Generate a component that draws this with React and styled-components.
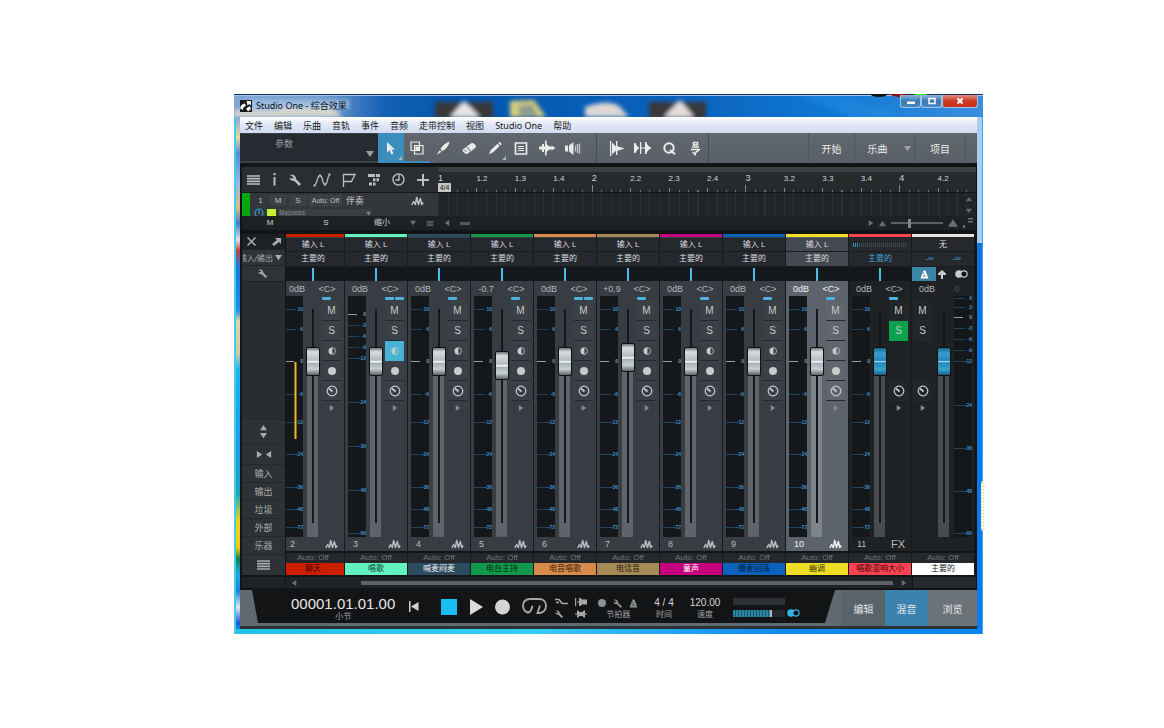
import { useState } from "react";
import styled, { createGlobalStyle } from "styled-components";

const menus = ["文件", "编辑", "乐曲", "音轨", "事件", "音频", "走带控制", "视图", "Studio One", "帮助"];

const beats = ["1", "1.2", "1.3", "1.4", "2", "2.2", "2.3", "2.4", "3", "3.2", "3.3", "3.4", "4", "4.2"];

const monoScale = [
  { y: 13, text: "10" },
  { y: 33, text: "6" },
  { y: 65, text: "0", zero: true },
  { y: 98, text: "-6" },
  { y: 126, text: "-12" },
  { y: 158, text: "-24" },
  { y: 191, text: "-36" },
  { y: 213, text: "-48" },
  { y: 231, text: "-72" },
];

const stereoScale = [
  { y: 18, text: "0", zero: true },
  { y: 29, text: "-3" },
  { y: 40, text: "-6" },
  { y: 51, text: "-9" },
  { y: 62, text: "-12" },
  { y: 106, text: "-24" },
  { y: 150, text: "-36" },
  { y: 194, text: "-48" },
  { y: 237, text: "-60" },
];

const masterScale = [
  { y: 2, text: "6" },
  { y: 11, text: "3" },
  { y: 21, text: "0", zero: true },
  { y: 32, text: "-3" },
  { y: 43, text: "-6" },
  { y: 54, text: "-9" },
  { y: 65, text: "-12" },
  { y: 109, text: "-24" },
  { y: 152, text: "-36" },
  { y: 195, text: "-48" },
  { y: 237, text: "-60" },
];

const channels = [
  { id: 2, name: "聊天", color: "#cc1f00", ink: "#3a0500", gain: "0dB", level: 76, peak: true },
  { id: 3, name: "唱歌", color: "#62f2c0", ink: "#0c4030", gain: "0dB", level: 76, stereo: true, mono: true },
  { id: 4, name: "喊麦闷麦", color: "#2d4b5e", ink: "#f2f5f7", gain: "0dB", level: 76 },
  { id: 5, name: "电台主持", color: "#11984a", ink: "#032a12", gain: "-0.7", level: 74 },
  { id: 6, name: "电音唱歌", color: "#d68a4c", ink: "#3a1c04", gain: "0dB", level: 76, stereo: true },
  { id: 7, name: "电话音", color: "#a58a58", ink: "#2c220c", gain: "+0.9", level: 78 },
  { id: 8, name: "童声", color: "#c6007c", ink: "#ffffff", gain: "0dB", level: 76 },
  { id: 9, name: "爆麦回荡", color: "#0a62bc", ink: "#021b3a", gain: "0dB", level: 76 },
  { id: 10, name: "幽调", color: "#f0de26", ink: "#383204", gain: "0dB", level: 76, selected: true },
  { id: 11, name: "唱歌混响大小", color: "#fb4450", ink: "#3c0408", gain: "0dB", level: 76, fx: true },
];

const WaveIcon = () => (
  <svg width="13" height="10" viewBox="0 0 13 10" fill="none" stroke="currentColor" strokeWidth="1.500" strokeLinejoin="round">
    <path d="M.8 9 2.600 5.500 4.300 8.500 5.700 1.500 7.500 8.500 9.300 2.500 10.800 8.500 12.200 6.500" />
  </svg>
);

const WrenchIcon = ({ size = 11 }) => (
  <svg width={size} height={size} viewBox="0 0 12 12" fill="currentColor">
    <path d="M1 1.200C3.800-.2 7.200 1.500 7 5l5 5-1.800 2L5.200 7C3 7.300.8 6.200.5 3.800l2.700.9L4.700 3.200z" />
  </svg>
);

const LinesIcon = ({ size = 13 }) => (
  <svg width={size} height={size - 3} viewBox="0 0 13 10" stroke="currentColor" strokeWidth="1.700">
    <path d="M0 1h13M0 3.600h13M0 6.300h13M0 9h13" />
  </svg>
);

const Triangle = ({ dir = "down", size = 7 }) => {
  const paths = {
    down: "M0 1h8L4 7z",
    up: "M0 7h8L4 1z",
    right: "M1 0v8l6-4z",
    left: "M7 0v8L1 4z",
  };
  return (
    <svg width={size} height={size} viewBox="0 0 8 8" fill="currentColor">
      <path d={paths[dir]} />
    </svg>
  );
};

const KnobIcon = () => (
  <svg width="12" height="12" viewBox="0 0 12 12" fill="none" stroke="currentColor" strokeWidth="1.200">
    <circle cx="6" cy="6" r="4.800" />
    <path d="M6.500 6.500 3 3.500" strokeWidth="1.700" />
  </svg>
);

const MonoIcon = () => (
  <svg width="8" height="8" viewBox="0 0 8 8">
    <path d="M4 .5a3.500 3.500 0 0 0 0 7z" fill="currentColor" />
    <path d="M4 .5a3.500 3.500 0 0 1 0 7z" fill="none" stroke="currentColor" strokeWidth=".8" />
  </svg>
);

const MetronomeIcon = ({ size = 10 }) => (
  <svg width={size} height={size} viewBox="0 0 10 10">
    <path d="M4 .5h2L9.500 9.500H.5z" fill="currentColor" />
    <path d="M3.200 7h3.600M5 6.500l-1.500-4" stroke="#131415" strokeOpacity=".6" strokeWidth=".8" />
  </svg>
);

const StereoIcon = () => (
  <svg width="13" height="8" viewBox="0 0 13 8">
    <circle cx="4" cy="4" r="3.800" fill="currentColor" />
    <circle cx="9" cy="4" r="3.200" fill="#101315" stroke="currentColor" strokeWidth="1.200" />
  </svg>
);

const toolIcons = {
  箭头工具: (
    <svg width="12" height="16" viewBox="0 0 12 16" fill="currentColor">
      <path d="M2 2v10.500l2.600-2.300 1.900 4.300 2-.9-1.900-4.200H10z" />
    </svg>
  ),
  范围工具: (
    <svg width="14" height="14" viewBox="0 0 14 14" fill="none" stroke="currentColor" strokeWidth="1.200">
      <path d="M1 1h8.500v8.500H1z" />
      <path d="M4.500 4.500H13V13H4.500z" />
      <path d="M6 6h2.500v2.500H6z" fill="currentColor" />
    </svg>
  ),
  切分工具: (
    <svg width="14" height="14" viewBox="0 0 14 14" fill="currentColor">
      <path d="M13.500.5C9 2 6 5 4.300 8.300l2.200 1.700C10 8 13 4.500 13.500.5zM3.600 9.300l1.900 1.500L.8 13.700z" />
    </svg>
  ),
  橡皮工具: (
    <svg width="15" height="13" viewBox="0 0 15 13">
      <path d="M1 7.500 9 1.300q1.500-.8 3 .3l1.500 1.700q1 1.400-.3 2.700L6 11.500q-1.500 1-3.200-.2L1 9.800Q.2 8.700 1 7.500z" fill="#e8e8e6" />
      <path d="M4.500 5.200q2.700 1 3.700 4.300" stroke="#7b8187" strokeWidth="1.200" fill="none" />
      <path d="M2.300 8.300q1.500 0 2.300 1.800" stroke="#7b8187" fill="none" />
    </svg>
  ),
  绘画工具: (
    <svg width="14" height="14" viewBox="0 0 14 14" fill="currentColor">
      <path d="m9.500 2.700 2.300 2.200-7 6.600L1 13.200l1.600-3.900zM10.300 2 11.500.8l2.300 2.200-1.200 1.200z" />
    </svg>
  ),
  静音工具: (
    <svg width="14" height="13" viewBox="0 0 14 13" fill="none" stroke="currentColor" strokeWidth="1.700">
      <path d="M1.500 1h11v11h-11z" />
      <path d="M4 4.500h6M4 6.500h6M4 8.500h6" strokeWidth="1.200" />
    </svg>
  ),
  弯曲工具: (
    <svg width="17" height="16" viewBox="0 0 17 16" fill="currentColor">
      <path d="M0 6.500h3V4h2v2.500h1V.5h1.600V4c1.500 2 3 2.200 4.900 3V5.500l4 2.500-4 2.500V9c-1.900.8-3.400 1-4.900 3v3.500H6V9.500H5V12H3V9.500H0z" />
    </svg>
  ),
  试听工具: (
    <svg width="16" height="13" viewBox="0 0 16 13">
      <path d="M0 3.500h3v6H0zM4 3.500 8.500 0v13L4 9.500z" fill="#e8e8e6" />
      <path d="M10.500 3.500v6M12.500 2v9M14.500 1.500v10" stroke="#c4c8ca" strokeWidth="1.300" />
    </svg>
  ),
};

const editIcons = {
  瞬态检测: (
    <svg width="16" height="15" viewBox="0 0 16 15" fill="currentColor">
      <path d="M1 0h1.200v15H1zM3 1.500l4 4V0h1.300v5.200c2 1 4.500 1 7.200 2.300-2.700 1.300-5.200 1.300-7.200 2.300V14H7V9.500l-4 4z" />
    </svg>
  ),
  量化边界: (
    <svg width="18" height="14" viewBox="0 0 18 14" fill="currentColor">
      <path d="M0 2h1.500C2.500 4.500 3.500 5.500 5.500 7c-2 1.500-3 2.500-4 5H0zM6 1h1.300v12H6zM7 6.400h4v1.200H7zM11 1h1.300c.7 3 2.500 4.500 5.200 6-2.700 1.500-4.500 3-5.200 6H11z" />
    </svg>
  ),
  量化: (
    <svg width="13" height="13" viewBox="0 0 13 13" fill="none" stroke="currentColor" strokeWidth="2">
      <circle cx="6" cy="6" r="4.700" />
      <path d="m7 8 5 4.300" />
    </svg>
  ),
  宏: (
    <svg width="12" height="15" viewBox="0 0 12 15" fill="none" stroke="currentColor" strokeWidth="1.500">
      <path d="M4.500 4V1.500h4V4zM3 6h7M2 8.500h9M10 8.500c0 2-4 1-4 5L3.500 11" />
    </svg>
  ),
};

const trackIcons = {
  轨道列表: <LinesIcon />,
  检查器: (
    <svg width="5" height="13" viewBox="0 0 5 13" fill="currentColor">
      <path d="M1.500 0h2v2.200h-2zM1.500 4h2v8.500h-2z" />
    </svg>
  ),
  轨道工具: <WrenchIcon size={12} />,
  自动化: (
    <svg width="18" height="14" viewBox="0 0 18 14" fill="none" stroke="currentColor" strokeWidth="1.300">
      <path d="M1.500 12.500C4.500 11 4 2.500 7 2.500s2 9 5 9 2-8 4.500-10" />
      <path d="M.5 11.500h2v2h-2zM6 1.500h2v2H6zM11 10.500h2v2h-2zM15.500.5h2v2h-2z" fill="currentColor" stroke="none" />
    </svg>
  ),
  标记轨: (
    <svg width="14" height="14" viewBox="0 0 14 14" fill="none" stroke="currentColor" strokeWidth="1.300">
      <path d="M1.500 14V1.500H13L9.500 8.500h-8" />
    </svg>
  ),
  编曲轨: (
    <svg width="12" height="12" viewBox="0 0 12 12" fill="currentColor">
      <path d="M0 0h7v3H0zM8 0h4v3H8zM5 4.200h2.500v3H5zM8.500 4.200h2.500v3H8.500zM1 8.500h3v3H1zM5 8.500h2.500v3H5z" />
    </svg>
  ),
  速度轨: (
    <svg width="13" height="13" viewBox="0 0 13 13" fill="none" stroke="currentColor" strokeWidth="1.400">
      <circle cx="6.500" cy="6.500" r="5.500" />
      <path d="M7 2v5H3.500" />
    </svg>
  ),
  添加轨道: (
    <svg width="12" height="12" viewBox="0 0 12 12" stroke="currentColor" strokeWidth="2">
      <path d="M6 0v12M0 6h12" />
    </svg>
  ),
};

function MeterScale({ marks, peak }) {
  return (
    <MeterSvg width="18" height="241" viewBox="0 0 18 241">
      {marks.map((mark) => (
        <g key={mark.text + mark.y}>
          <path d={`M0 ${mark.y + 0.5}H${mark.zero ? 9 : 11}`} stroke={mark.zero ? "#9a9c9e" : "#20425a"} />
          <text x="18" y={mark.y + 2} textAnchor="end" fill={mark.zero ? "#7d9db2" : "#3f92cc"}>
            {mark.text}
          </text>
        </g>
      ))}
      {peak && <path d="M10.500 66v77" stroke="#f0b824" strokeWidth="2" />}
    </MeterSvg>
  );
}

function Fader({ label, start, blue, light }) {
  const [value, setValue] = useState(start);
  return (
    <FaderInput
      type="range"
      min="0"
      max="100"
      aria-label={label}
      value={value}
      $blue={blue}
      $light={light}
      onChange={(event) => setValue(Number(event.target.value))}
      style={{ "--lit": `${14 + value * 2.12}px` }}
    />
  );
}

function Channel({ data }) {
  const { id, name, color, ink, gain, level, stereo, mono, peak, selected, fx } = data;
  return (
    <Strip $selected={selected} $dark={fx}>
      <ColorBar $color={color} />
      <Slot $selected={selected}>{fx ? <InputMeter /> : "输入 L"}</Slot>
      <Slot $selected={selected} $tall $blue={fx}>主要的</Slot>
      <Pan />
      <Values $bright={selected}>
        <span>{gain}</span>
        <span>&lt;C&gt;</span>
      </Values>
      <FaderArea>
        <MeterScale marks={stereo && mono ? stereoScale : monoScale} peak={peak} />
        <Fader label={name} start={level} blue={fx} light={selected} />
        <ButtonColumn>
          <Links>
            <i />
            {stereo && <i />}
          </Links>
          <StripButton aria-label="静音">M</StripButton>
          <StripButton aria-label="独奏" $on={fx && "#0ba24e"}>S</StripButton>
          <StripButton aria-label="单声道" $on={mono && "#45b4d4"} $hidden={fx}><MonoIcon /></StripButton>
          <StripButton aria-label="录音" $hidden={fx}><RecordDot /></StripButton>
          <StripButton aria-label="监听"><KnobIcon /></StripButton>
          <StripButton aria-label="展开" $plain><Triangle dir="right" size={6} /></StripButton>
        </ButtonColumn>
      </FaderArea>
      <NumberRow $bright={selected}>
        <span>{id}</span>
        {fx ? <FxMark>FX</FxMark> : <WaveIcon />}
      </NumberRow>
      <AutoRow>Auto: Off</AutoRow>
      <NameLabel $color={color} $ink={ink}>{name}</NameLabel>
    </Strip>
  );
}

function Master() {
  return (
    <Strip $dark>
      <ColorBar $color="#e4e4e4" />
      <Slot>无</Slot>
      <Slot $tall $blue $spread>
        <span>-∞</span>
        <span>-∞</span>
      </Slot>
      <MasterTools>
        <button aria-label="节拍器"><MetronomeIcon size={9} /></button>
        <button aria-label="输出">
          <svg width="8" height="9" viewBox="0 0 8 9" fill="currentColor"><path d="M3 9V5H0V3.500L4 0l4 3.500V5H5v4z" /></svg>
        </button>
        <button aria-label="立体声"><StereoIcon /></button>
      </MasterTools>
      <Values>
        <span>0dB</span>
        <Dim>0</Dim>
      </Values>
      <FaderArea>
        <ButtonColumn $left>
          <Links />
          <StripButton aria-label="静音">M</StripButton>
          <StripButton aria-label="独奏">S</StripButton>
          <StripButton $hidden />
          <StripButton $hidden />
          <StripButton aria-label="监听"><KnobIcon /></StripButton>
          <StripButton aria-label="展开" $plain><Triangle dir="right" size={6} /></StripButton>
        </ButtonColumn>
        <Fader label="主要的" start={76} blue />
        <MeterScale marks={masterScale} />
      </FaderArea>
      <NumberRow />
      <AutoRow>Auto: Off</AutoRow>
      <NameLabel $color="#ffffff" $ink="#222222">主要的</NameLabel>
    </Strip>
  );
}

export default function App() {
  return (
    <>
      <GlobalStyle />
      <Page>
        <Window>
          <TitleBar>
            <Glass viewBox="0 0 749 23" preserveAspectRatio="none">
              <defs>
                <filter id="haze"><feGaussianBlur stdDeviation="2" /></filter>
                <linearGradient id="sky">
                  <stop offset="0" stopColor="#7fa6d4" />
                  <stop offset=".12" stopColor="#7199cc" />
                  <stop offset=".2" stopColor="#1360b4" />
                  <stop offset=".3" stopColor="#0456ae" />
                  <stop offset=".6" stopColor="#0a62bc" />
                  <stop offset=".8" stopColor="#0f78d4" />
                  <stop offset="1" stopColor="#3a8ee0" />
                </linearGradient>
              </defs>
              <path d="M0 0h749v23H0z" fill="url(#sky)" />
              <g filter="url(#haze)">
                <path d="M0 16h44l6-6 20 4 25-4 14 13H0z" fill="#d9d6cc" />
                <path d="M10 6h105v9H10z" fill="#a9c4e6" opacity=".8" />
                <path d="M201 8h58v17h-58z" fill="#37373b" />
                <path d="m216 23 14-16 16 16z" fill="#e6e6e6" />
                <path d="m276 7 24-1 12 17h-36z" fill="#d6cf7c" />
                <path d="m284 12 14-2 6 12h-18z" fill="#8d9c8c" />
                <path d="M351 13q22-8 34-1l10 11h-44z" fill="#ddd8d4" />
                <path d="M415 8h57v17h-57z" fill="#37373b" />
                <path d="m430 23 16-17 14 17z" fill="#e6dfdc" />
                <path d="m560 0 60 23h50L600 0z" fill="#2f9aec" opacity=".3" />
              </g>
              <path d="M0 .5h749" stroke="#1a2f52" />
              <path d="M0 1.500h749" stroke="#9cc7f2" />
              <path d="M636 0h18q-2 3-9 3t-9-3z" fill="#111" />
              <path d="M654 0h22q-6 3-11 3t-11-3z" fill="#8c1010" />
              <path d="M680 0h13q-1 4-6 4t-7-4z" fill="#35f018" />
            </Glass>
            <AppLogo width="12" height="12" viewBox="0 0 12 12">
              <path d="M0 0h12v12H0z" fill="#17191c" />
              <path d="M0 8.500Q.5 4 5 3.500l1 2.500Q3 6.500 3 10zM6.500 1H11v4.500L9.500 4 7.500 5.500zM6 8.500l4-2.500 1 3-3 2.500z" fill="#f4f4f4" />
            </AppLogo>
            <Title>Studio One - 综合效果</Title>
            <WindowButtons>
              <WindowButton aria-label="最小化"><svg width="8" height="8"><path d="M0 4.500h8v2.500H0z" fill="#fff" /></svg></WindowButton>
              <WindowButton aria-label="最大化"><svg width="8" height="8"><path d="M1 1.500h6v5H1z" fill="none" stroke="#fff" strokeWidth="1.500" /></svg></WindowButton>
              <WindowButton aria-label="关闭" $close><svg width="8" height="8"><path d="m1.500 1.500 5 5m0-5-5 5" stroke="#fff" strokeWidth="1.800" /></svg></WindowButton>
            </WindowButtons>
          </TitleBar>

          <Body>
            <MenuBar>
              {menus.map((menu) => (
                <button key={menu}>{menu}</button>
              ))}
            </MenuBar>

            <Toolbar>
              <ParamBox>
                <span>参数</span>
                <Triangle size={8} />
              </ParamBox>
              <ToolGroup>
                {Object.keys(toolIcons).map((tool, index) => (
                  <ToolButton key={tool} aria-label={tool} $active={index === 0} $underline={index === 1} $corner={index === 0 || index === 4}>
                    {toolIcons[tool]}
                  </ToolButton>
                ))}
              </ToolGroup>
              <ToolGroup $divided>
                {Object.keys(editIcons).map((tool) => (
                  <ToolButton key={tool} aria-label={tool}>{editIcons[tool]}</ToolButton>
                ))}
              </ToolGroup>
              <Pages>
                <PageButton>开始</PageButton>
                <PageButton>乐曲</PageButton>
                <PageArrow aria-label="乐曲列表"><Triangle size={7} /></PageArrow>
                <PageButton $wide>项目</PageButton>
              </Pages>
            </Toolbar>

            <Arrange>
              <TrackSide>
                <TrackTools>
                  {Object.keys(trackIcons).map((tool) => (
                    <button key={tool} aria-label={tool}>{trackIcons[tool]}</button>
                  ))}
                </TrackTools>
                <TrackHead>
                  <TrackLine>
                    <TrackNumber>1</TrackNumber>
                    <MiniButton>M</MiniButton>
                    <MiniButton>S</MiniButton>
                    <MiniButton $auto>Auto: Off</MiniButton>
                    <TrackName>伴奏</TrackName>
                    <WaveIcon />
                  </TrackLine>
                  <TrackLine $second>
                    <svg width="10" height="10" viewBox="0 0 10 10" fill="none" stroke="#2d9fc4" strokeWidth="1.200">
                      <circle cx="5" cy="5" r="4" />
                      <path d="M5 2v4" />
                    </svg>
                    <Swatch />
                    <Bypass>Bypass <Triangle size={5} /></Bypass>
                  </TrackLine>
                </TrackHead>
              </TrackSide>
              <Timeline>
                <Ruler>
                  {beats.map((beat) => (
                    <Beat key={beat} $bar={!beat.includes(".")}>
                      {beat}
                      {beat === "1" && <Signature>4/4</Signature>}
                    </Beat>
                  ))}
                </Ruler>
                <Lanes>
                  {beats.map((beat) => (
                    <i key={beat} />
                  ))}
                  <LaneScroll>
                    <Triangle dir="up" size={6} />
                    <Triangle size={6} />
                  </LaneScroll>
                </Lanes>
              </Timeline>
            </Arrange>

            <ArrangeFoot>
              <FootGroup>
                <button>M</button>
                <button>S</button>
                <button>缩小</button>
              </FootGroup>
              <FootIcons>
                <Triangle size={6} />
                <LinesIcon size={8} />
                <Triangle dir="left" size={6} />
                <ScrollStub />
              </FootIcons>
              <ZoomGroup>
                <Triangle dir="right" size={6} />
                <Triangle dir="up" size={7} />
                <ZoomSlider type="range" aria-label="缩放" defaultValue="34" />
                <Triangle dir="up" size={10} />
                <svg width="10" height="10" viewBox="0 0 10 10" fill="currentColor">
                  <path d="M5 0h5v1.500H5zM5 3h5v1.500H5zM0 7h2v3H0z" />
                </svg>
              </ZoomGroup>
            </ArrangeFoot>

            <Mixer>
              <Sidebar>
                <SideRow $dark>
                  <button aria-label="关闭混音台">
                    <svg width="9" height="9" viewBox="0 0 9 9" stroke="currentColor" strokeWidth="1.500"><path d="m.5.5 8 8m0-8-8 8" /></svg>
                  </button>
                  <button aria-label="分离">
                    <svg width="9" height="9" viewBox="0 0 9 9" fill="currentColor"><path d="M3 1h6v6L7 5 2 9 0 7l5-4z" /></svg>
                  </button>
                </SideRow>
                <SideRow>
                  <Clipped>输入/输出</Clipped>
                  <Triangle size={7} />
                </SideRow>
                <SideRow $center><WrenchIcon size={9} /></SideRow>
                <SideSpace />
                <SideButton $size={24} aria-label="高度">
                  <Stack>
                    <Triangle dir="up" size={7} />
                    <Triangle size={7} />
                  </Stack>
                </SideButton>
                <SideButton $size={21} aria-label="宽度">
                  <Triangle dir="right" size={7} />
                  <Triangle dir="left" size={7} />
                </SideButton>
                <SideButton $size={18}>输入</SideButton>
                <SideButton $size={18}>输出</SideButton>
                <SideButton $size={18}>垃圾</SideButton>
                <SideButton $size={18}>外部</SideButton>
                <SideButton $size={18}>乐器</SideButton>
                <SideButton $size={21} aria-label="列表"><LinesIcon size={13} /></SideButton>
              </Sidebar>
              <Console>
                <Strips>
                  {channels.map((channel) => (
                    <Channel key={channel.id} data={channel} />
                  ))}
                  <Master />
                </Strips>
              </Console>
            </Mixer>

            <ScrollRow>
              <ScrollSide />
              <ScrollTrack>
                <Triangle dir="left" size={6} />
                <ScrollThumb />
                <Triangle dir="right" size={6} />
              </ScrollTrack>
              <ScrollEnd />
            </ScrollRow>

            <TransportBar>
              <Transport>
                <Readout>
                  <TimeCode>00001.01.01.00</TimeCode>
                  <Small>小节</Small>
                </Readout>
                <PlainButton aria-label="返回零点" $space={14}>
                  <svg width="10" height="11" viewBox="0 0 10 11" fill="currentColor"><path d="M0 0h1.500v11H0zM9.500 1v9L2 5.500z" /></svg>
                </PlainButton>
                <PlainButton aria-label="停止" $space={22}><StopSquare /></PlainButton>
                <PlainButton aria-label="播放" $space={13}>
                  <svg width="13" height="16" viewBox="0 0 13 16" fill="#dcdcdc"><path d="M0 0v16l13-8z" /></svg>
                </PlainButton>
                <PlainButton aria-label="录音" $space={12}>
                  <svg width="15" height="16" viewBox="0 0 15 16"><circle cx="7.500" cy="8" r="7.500" fill="#d4d4d4" /></svg>
                </PlainButton>
                <PlainButton aria-label="循环" $space={12}>
                  <svg width="25" height="17" viewBox="0 0 25 17" fill="none" stroke="#a4a6a8" strokeWidth="1.900">
                    <path d="M6 14.500C2.800 13.500 1 11 1 7.500 1 3.500 4 1 8 1h9c4 0 7 2.500 7 6.500s-2.500 7-6 7.500h-2.500L18 7.500M5 14.800c3 0 4.500-2 5.500-7" />
                  </svg>
                </PlainButton>
                <IconGrid>
                  <svg width="13" height="8" viewBox="0 0 13 8" fill="none" stroke="currentColor" strokeWidth="1.600"><path d="M0 1.500h4l3 4h6M1 4.500h3" /></svg>
                  <svg width="12" height="8" viewBox="0 0 12 8" fill="currentColor"><path d="M0 0h1.200v8H0zM2 3.400h2V0h1.500l1.500 1.500h5v5H7L5.500 8H4V4.600H2z" /></svg>
                  <WrenchIcon size={8} />
                  <svg width="12" height="8" viewBox="0 0 12 8" fill="currentColor"><path d="M0 3.400h2V.5h1.300L4.500 2h3L8.700.5H10v2.900h2v1.200h-2v2.900H8.700L7.500 6h-3L3.300 7.500H2V4.600H0z" /></svg>
                </IconGrid>
                <Readout $space={11}>
                  <IconLine>
                    <RecordDot />
                    <WrenchIcon size={9} />
                    <MetronomeIcon size={9} />
                  </IconLine>
                  <Small>节拍器</Small>
                </Readout>
                <Readout $space={16}>
                  <Figure>4 / 4</Figure>
                  <Small>时间</Small>
                </Readout>
                <Readout $space={16}>
                  <Figure>120.00</Figure>
                  <Small>速度</Small>
                </Readout>
                <OutMeters>
                  <i />
                  <OutLevel />
                </OutMeters>
                <OutStereo><StereoIcon /></OutStereo>
              </Transport>
              <ViewTabs>
                <ViewTab>编辑</ViewTab>
                <ViewTab $active>混音</ViewTab>
                <ViewTab $last>浏览</ViewTab>
              </ViewTabs>
            </TransportBar>
          </Body>
          <EdgeTab />
        </Window>
      </Page>
    </>
  );
}

const GlobalStyle = createGlobalStyle`
  * {
    box-sizing: border-box;
  }
  body {
    margin: 0;
    background: #ffffff;
    font-family: "Liberation Sans", "Noto Sans CJK SC", sans-serif;
    font-size: 9px;
  }
  button {
    margin: 0;
    padding: 0;
    border: 0;
    background: none;
    color: inherit;
    font: inherit;
  }
  svg {
    display: block;
    flex: none;
  }
`;

const Page = styled.main`
  padding: 94px 181px 94px 234px;
`;

const Window = styled.div`
  position: relative;
  padding: 0 6px 5px;
  background:
    linear-gradient(90deg, #4ec4f0 0 2px, transparent 2px),
    linear-gradient(270deg, #3fa8ec 0 1px, transparent 1px),
    linear-gradient(#a9cdf2 0 149px, transparent 149px) right / 6px 100% no-repeat,
    linear-gradient(90deg, #1fc4e4, #35cdf2 40%, #168cf0 70%, #0a84f0) bottom / 100% 5px no-repeat,
    linear-gradient(#1172d8, #0a7cee) right / 6px 100% no-repeat,
    linear-gradient(#7fa8d8 4%, #e8d8a0 8%, #4d8fd0 11%, #8fb8e6 16%, #d8c088 21%, #3f80c8 24%, #e0e4e8 27%, #c04040 29%,
      #1a78d8 32%, #1a90e8 40%, #d8d4b0 42%, #d0cca8 48%, #18b8ec 51%, #1aa0e8 64%, #18a8c0 74%, #e8d820 79%, #f0c810 84%, #188048 86%,
      #18b0e0 89%, #1c80d8 92%, #e0e8f4 95%, #1858d0 98%, #18c0e8) left / 6px 100% no-repeat;
`;

const TitleBar = styled.header`
  position: relative;
  display: flex;
  align-items: center;
  height: 23px;
  margin: 0 -6px;
  padding-left: 6px;
`;

const Glass = styled.svg`
  position: absolute;
  inset: 0;
  width: 100%;
  height: 100%;
`;

const AppLogo = styled.svg`
  position: relative;
`;

const Title = styled.span`
  position: relative;
  margin-left: 4px;
  font-family: "Noto Sans", "Noto Sans CJK SC", sans-serif;
  color: #0a1420;
`;

const WindowButtons = styled.div`
  position: relative;
  display: flex;
  align-self: flex-start;
  margin: 1px 5px 0 auto;
`;

const WindowButton = styled.button`
  display: flex;
  align-items: center;
  justify-content: center;
  width: ${(props) => (props.$close ? 36 : 21)}px;
  height: 13px;
  border: 1px solid #a4c4e4;
  border-top: 0;
  border-radius: 0 0 3px 3px;
  background: ${(props) =>
    props.$close ? "linear-gradient(#e09488, #cc3820 50%, #c8301c)" : "linear-gradient(#8cb4dc, #3c78b4 50%, #4888c4)"};
`;

const Body = styled.div`
  background: #121416;
  color: #c8cacc;
`;

const MenuBar = styled.nav`
  display: flex;
  gap: 11px;
  height: 16px;
  padding-left: 5px;
  background: linear-gradient(#ffffff, #e2e8f6 45%, #d2dcf0);
  color: #16181c;
  font-family: "Noto Sans", "Noto Sans CJK SC", sans-serif;
`;

const Toolbar = styled.div`
  display: flex;
  height: 30px;
  background: linear-gradient(#60676e, #596067);
  color: #ececea;
`;

const ParamBox = styled.div`
  display: flex;
  flex: none;
  align-items: flex-end;
  justify-content: space-between;
  width: 138px;
  padding: 4px 4px 3px 35px;
  border: solid #3c4148;
  border-width: 1px 0 2px;
  background: #262a31;
  color: #9a9da0;
  span {
    align-self: flex-start;
    line-height: 12px;
  }
`;

const ToolGroup = styled.div`
  display: flex;
  ${(props) =>
    props.$divided &&
    `
    margin-left: 10px;
    padding-left: 7px;
    border: solid #454b52;
    border-width: 0 1px;
  `}
`;

const ToolButton = styled.button`
  position: relative;
  display: flex;
  align-items: center;
  justify-content: center;
  width: 26px;
  background: ${(props) => (props.$active ? "#3c8cbc" : "none")};
  box-shadow: inset 0 -2px ${(props) => (props.$active || props.$underline ? "#3c8cbc" : "transparent")};
  &::after {
    content: "";
    display: ${(props) => (props.$corner ? "block" : "none")};
    position: absolute;
    right: 2px;
    bottom: 3px;
    border: 2px solid #a9b8c2;
    border-top-color: transparent;
    border-left-color: transparent;
  }
`;

const Pages = styled.div`
  display: flex;
  margin-left: auto;
  padding-right: 11px;
  font-size: 10px;
`;

const PageButton = styled.button`
  width: ${(props) => (props.$wide ? 52 : 46)}px;
  border-left: 1px solid #50565d;
  &:last-child {
    border-right: 1px solid #50565d;
  }
`;

const PageArrow = styled.button`
  display: flex;
  align-items: center;
  justify-content: center;
  width: 14px;
  color: #9da3a8;
`;

const Arrange = styled.section`
  display: flex;
  padding: 4px 1px 0 2px;
`;

const TrackSide = styled.div`
  flex: none;
  width: 196px;
`;

const TrackTools = styled.div`
  display: flex;
  justify-content: space-between;
  height: 25px;
  padding: 0 9px 0 5px;
  background: #2a2d32;
  color: #bcbec0;
  button {
    display: flex;
    align-items: center;
  }
`;

const TrackHead = styled.div`
  height: 23px;
  margin-top: 1px;
  border-left: 8px solid #06a80e;
  background: #33373c;
  overflow: hidden;
`;

const TrackLine = styled.div`
  display: flex;
  align-items: center;
  gap: ${(props) => (props.$second ? 3 : 2)}px;
  height: ${(props) => (props.$second ? 10 : 15)}px;
  padding: 0 14px 0 4px;
  color: #bfc1c3;
`;

const TrackNumber = styled.span`
  width: 13px;
  text-align: center;
  font-size: 8px;
`;

const MiniButton = styled.button`
  width: ${(props) => (props.$auto ? 33 : 18)}px;
  height: 11px;
  border: ${(props) => (props.$auto ? "1px solid #41454a" : "0")};
  background: #3b3f44;
  font-size: ${(props) => (props.$auto ? 7 : 8)}px;
  line-height: 9px;
`;

const TrackName = styled.span`
  flex: 1;
  margin-left: 2px;
`;

const Swatch = styled.span`
  width: 9px;
  height: 9px;
  background: #c8f030;
`;

const Bypass = styled.span`
  display: flex;
  align-items: center;
  justify-content: space-between;
  width: 92px;
  background: #3b3f44;
  color: #85888b;
  font-size: 8px;
  line-height: 8px;
`;

const Timeline = styled.div`
  flex: 1;
  min-width: 0;
`;

const Ruler = styled.div`
  display: grid;
  grid-template-columns: repeat(14, minmax(0, 1fr));
  height: 25px;
  border-top: 5px solid #3a3f42;
  background: #262a2d;
`;

const Beat = styled.div`
  position: relative;
  padding-top: 2px;
  color: #d2d4d6;
  font-size: ${(props) => (props.$bar ? 9 : 8)}px;
  line-height: 9px;
  background:
    linear-gradient(#84878a, #84878a) left bottom / 1px ${(props) => (props.$bar ? 7 : 4)}px no-repeat,
    repeating-linear-gradient(90deg, #6a6d70 0 1px, transparent 1px 25%) left bottom / 100% 2px no-repeat;
`;

const Signature = styled.span`
  position: absolute;
  left: 0;
  bottom: 0;
  width: 13px;
  background: #c6c8c8;
  color: #222;
  font-size: 7px;
  line-height: 9px;
  text-align: center;
`;

const Lanes = styled.div`
  position: relative;
  display: grid;
  grid-template-columns: repeat(14, minmax(0, 1fr));
  height: 23px;
  margin-top: 1px;
  background: #202427;
  i {
    background: repeating-linear-gradient(90deg, #2d3135 0 1px, transparent 1px 25%);
  }
`;

const LaneScroll = styled.div`
  position: absolute;
  right: 4px;
  top: 3px;
  display: flex;
  flex-direction: column;
  gap: 6px;
  color: #63676b;
`;

const ArrangeFoot = styled.div`
  display: flex;
  align-items: center;
  height: 14px;
  margin: 0 1px 0 2px;
  background: #1e2123;
  color: #6c7074;
`;

const FootGroup = styled.div`
  display: flex;
  button {
    width: 56px;
    color: #d0d2d4;
    font-size: 8px;
    line-height: 14px;
  }
`;

const FootIcons = styled.div`
  display: flex;
  align-items: center;
  gap: 10px;
`;

const ScrollStub = styled.span`
  width: 10px;
  height: 3px;
  background: #55595d;
`;

const ZoomGroup = styled.div`
  display: flex;
  align-items: center;
  gap: 5px;
  margin-left: auto;
  padding-right: 3px;
`;

const ZoomSlider = styled.input`
  appearance: none;
  width: 52px;
  height: 11px;
  margin: 0;
  background: linear-gradient(#5c6064, #5c6064) center / 100% 2px no-repeat;
  &::-webkit-slider-thumb {
    appearance: none;
    width: 3px;
    height: 9px;
    background: #85898c;
  }
`;

const Mixer = styled.section`
  display: flex;
  padding: 4px 1px 0 2px;
`;

const Sidebar = styled.aside`
  display: flex;
  flex: none;
  flex-direction: column;
  width: 43px;
  margin-right: 1px;
  background: #292c30;
  color: #a9acae;
`;

const SideRow = styled.div`
  display: flex;
  align-items: center;
  justify-content: ${(props) => (props.$center ? "center" : "space-between")};
  height: 16px;
  padding: ${(props) => (props.$dark ? "0 4px 0 5px" : "0 3px 0 1px")};
  border-bottom: 1px solid #202327;
  background: ${(props) => (props.$dark ? "#1e2124" : "#2f3337")};
  white-space: nowrap;
`;

const Clipped = styled.span`
  display: flex;
  justify-content: flex-end;
  width: 30px;
  overflow: hidden;
  font-size: 8px;
`;

const SideSpace = styled.div`
  flex: 1;
`;

const SideButton = styled.button`
  display: flex;
  align-items: center;
  justify-content: center;
  gap: 2px;
  height: ${(props) => props.$size}px;
  border-top: 1px solid #24272b;
  background: #2e3236;
  line-height: 12px;
`;

const Stack = styled.span`
  display: flex;
  flex-direction: column;
  gap: 1px;
`;

const Console = styled.div`
  flex: 1;
  min-width: 0;
  overflow: hidden;
`;

const Strips = styled.div`
  display: grid;
  grid-template-columns: repeat(11, minmax(0, 1fr));
  margin-right: 1px;
  margin-left: -4px;
`;

const Strip = styled.div`
  border-right: 1px solid #17191c;
  background: ${(props) => (props.$selected ? "#5d636c" : props.$dark ? "#1f2225" : "#383c43")};
`;

const ColorBar = styled.div`
  height: 3px;
  margin-bottom: 1px;
  background: ${(props) => props.$color};
`;

const Slot = styled.div`
  display: flex;
  align-items: center;
  justify-content: ${(props) => (props.$spread ? "space-around" : "center")};
  height: ${(props) => (props.$tall ? 15 : 14)}px;
  padding: 0 4px;
  border-bottom: 1px solid #1a1c1f;
  background: ${(props) => (props.$selected ? "#444950" : "#25282c")};
  color: ${(props) => (props.$blue ? "#46a4dc" : "#dcdee0")};
  font-size: 8px;
  line-height: 12px;
`;

const InputMeter = styled.span`
  width: 100%;
  height: 4px;
  background:
    repeating-linear-gradient(90deg, transparent 0 1px, #25282c 1px 2px),
    linear-gradient(90deg, #3494bc 5px, #44484c 5px);
`;

const Pan = styled.div`
  height: 14px;
  background:
    linear-gradient(#4cbce4, #4cbce4) center / 2px 13px no-repeat,
    #15181b;
`;

const Values = styled.div`
  display: grid;
  grid-template-columns: 1fr 1fr;
  height: 15px;
  padding-right: 2px;
  color: ${(props) => (props.$bright ? "#f4f4f4" : "#b4b7ba")};
  line-height: 16px;
  text-align: center;
`;

const Dim = styled.span`
  color: #50545a;
`;

const FaderArea = styled.div`
  display: flex;
  justify-content: space-between;
  height: 241px;
  padding: 0 2px 0 3px;
`;

const MeterSvg = styled.svg`
  background: #15181b;
  font-family: "Liberation Sans", sans-serif;
  font-size: 5px;
  font-weight: bold;
`;

const FaderInput = styled.input`
  appearance: none;
  writing-mode: vertical-lr;
  direction: rtl;
  width: 14px;
  height: 241px;
  margin: 0;
  background:
    linear-gradient(#16181b, #16181b) center 13px / 2px 214px no-repeat,
    linear-gradient(
        ${(props) => (props.$light ? "#7c838a, #7c838a" : props.$blue ? "#4a4b4c, #4a4b4c" : "#5e646a, #5e646a")}
      )
      center bottom / 11px var(--lit) no-repeat;
  &::-webkit-slider-thumb {
    appearance: none;
    width: 14px;
    height: 29px;
    border: 1px solid #0e1012;
    border-radius: 2px;
    background: ${(props) =>
      props.$blue
        ? "linear-gradient(#1c648e, #3c9ccc 20%, #2484b8 48%, #9cd4f0 49% 53%, #2484b8 54%, #3ca0d0 80%, #185c84)"
        : "linear-gradient(#6e7476, #d8dcdc 14%, #b4bcbe 46%, #f0f4f4 48% 53%, #a4b0b4 55%, #c8d0d0 78%, #5e6466)"};
  }
`;

const ButtonColumn = styled.div`
  display: flex;
  flex-direction: column;
  width: 20px;
  margin-left: ${(props) => (props.$left ? -2 : 0)}px;
`;

const Links = styled.div`
  display: flex;
  gap: 1px;
  height: 5px;
  padding-top: 1px;
  i {
    width: 9px;
    height: 3px;
    border-radius: 1px;
    background: #50b0e0;
  }
`;

const StripButton = styled.button`
  display: flex;
  align-items: center;
  justify-content: center;
  width: 19px;
  height: ${(props) => (props.$plain ? 14 : 20)}px;
  border-bottom: 1px solid ${(props) => (props.$plain || props.$on ? "transparent" : "#25282d")};
  background: ${(props) => props.$on || (props.$plain ? "none" : "#ffffff05")};
  color: ${(props) => (props.$plain ? "#85898d" : "#c8cacc")};
  font-size: 10px;
  visibility: ${(props) => (props.$hidden ? "hidden" : "visible")};
`;

const RecordDot = styled.span`
  width: 8px;
  height: 8px;
  border-radius: 50%;
  background: currentColor;
`;

const NumberRow = styled.div`
  display: flex;
  align-items: center;
  justify-content: space-between;
  height: 14px;
  padding: 0 6px 0 8px;
  color: ${(props) => (props.$bright ? "#f0f0f0" : "#b8bbbe")};
`;

const FxMark = styled.span`
  font-size: 11px;
`;

const AutoRow = styled.div`
  height: 12px;
  border-top: 2px solid #121416;
  background: #24272b;
  color: #73777b;
  font-size: 8px;
  line-height: 10px;
  text-align: center;
`;

const NameLabel = styled.div`
  height: 12px;
  background: ${(props) => props.$color};
  color: ${(props) => props.$ink};
  font-size: 8px;
  line-height: 12px;
  text-align: center;
  white-space: nowrap;
`;

const MasterTools = styled.div`
  display: grid;
  grid-template-columns: 24px 1fr 2fr;
  height: 14px;
  button {
    display: flex;
    align-items: center;
    justify-content: center;
  }
  button:first-child {
    background: #3c84a8;
    color: #fff;
  }
`;

const ScrollRow = styled.div`
  display: flex;
  gap: 1px;
  padding: 2px 1px 2px 2px;
`;

const ScrollSide = styled.div`
  width: 43px;
  background: #202326;
`;

const ScrollTrack = styled.div`
  display: flex;
  flex: 1;
  align-items: center;
  height: 11px;
  padding: 0 5px;
  background: #202326;
  color: #6a6d70;
`;

const ScrollThumb = styled.div`
  flex: 1;
  height: 4px;
  margin: 0 8px 0 64px;
  background: #5e6266;
`;

const ScrollEnd = styled.div`
  width: 63px;
  background: #26292c;
`;

const TransportBar = styled.footer`
  display: flex;
  border-bottom: 3px solid #2a3236;
  background: #616a70;
`;

const Transport = styled.div`
  display: flex;
  flex: 1;
  align-items: center;
  height: 33px;
  margin: 0 7px 3px 12px;
  padding-left: 39px;
  background: #131415;
  clip-path: polygon(0 0, 100% 0, calc(100% - 10px) 100%, 6px 100%);
`;

const Readout = styled.div`
  display: flex;
  flex-direction: column;
  align-items: center;
  margin-left: ${(props) => props.$space || 0}px;
  padding-top: 3px;
`;

const TimeCode = styled.span`
  color: #e6e6e6;
  font-size: 15px;
  line-height: 17px;
`;

const Small = styled.span`
  color: #a2a4a6;
  font-size: 8px;
  line-height: 10px;
`;

const Figure = styled.span`
  color: #d4d4d4;
  font-size: 10px;
  line-height: 14px;
`;

const IconLine = styled.span`
  display: flex;
  align-items: center;
  gap: 7px;
  height: 14px;
  color: #8c8f91;
`;

const PlainButton = styled.button`
  margin-left: ${(props) => props.$space}px;
  color: #d0d0d0;
`;

const StopSquare = styled.span`
  display: block;
  width: 16px;
  height: 16px;
  background: #18bcf4;
`;

const IconGrid = styled.div`
  display: grid;
  grid-template-columns: 14px 12px;
  gap: 4px 6px;
  margin-left: 8px;
  padding-top: 2px;
  color: #a4a6a8;
`;

const OutMeters = styled.div`
  display: flex;
  flex-direction: column;
  gap: 5px;
  width: 52px;
  margin-left: 13px;
  padding-top: 2px;
  i {
    height: 7px;
    background: #2c2f33;
  }
`;

const OutLevel = styled.div`
  height: 7px;
  background:
    linear-gradient(#a8bcc4, #a8bcc4) 37px 0 / 2px 100% no-repeat,
    repeating-linear-gradient(90deg, transparent 0 2px, #1c5468 2px 3px) 0 0 / 37px 100% no-repeat,
    linear-gradient(90deg, #2c86a4 37px, #25282b 37px);
`;

const OutStereo = styled.div`
  align-self: flex-end;
  margin: 0 0 6px 2px;
  color: #30b8ec;
`;

const ViewTabs = styled.div`
  display: flex;
  font-size: 10px;
`;

const ViewTab = styled.button`
  width: ${(props) => (props.$last ? 49 : 43)}px;
  background: ${(props) => (props.$active ? "#3c82ae" : props.$last ? "#6c7378" : "#59636a")};
  color: #e4e6e8;
`;

const EdgeTab = styled.div`
  position: absolute;
  top: 387px;
  right: -1px;
  width: 3px;
  height: 50px;
  border-radius: 3px 0 0 3px;
  background: repeating-linear-gradient(#fdf6dc 0 2px, #ece0b4 2px 3px);
`;
